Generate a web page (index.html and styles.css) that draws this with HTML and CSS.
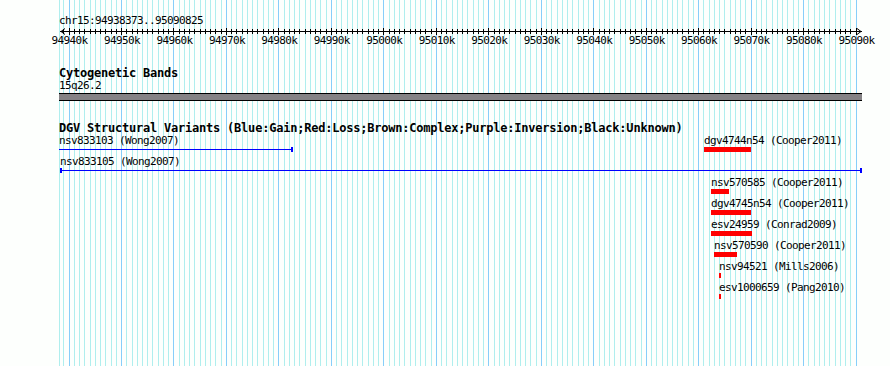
FILE: index.html
```html
<!DOCTYPE html>
<html lang="en">

<head>
    <meta charset="UTF-8">
    <title>chr15:94938373..95090825</title>
    <link rel="stylesheet" href="styles.css">
    <script>
        window.onload = function () {
            let start = 94938373, end = 95090825, width = 800;
            let px = pos => 1 + Math.round((pos - start) * width / (end - start + 1));

            let minor = 'M0.5 0V366', major = '', tickMinor = '', tickMajor = '';
            for (let kb = 94939; kb <= 95090; kb++) {
                let x = px(kb * 1000) + 0.5;
                if (kb % 10 == 0) {
                    major += 'M' + x + ' 0V366';
                    tickMajor += 'M' + x + ' 1V8';
                } else {
                    minor += 'M' + x + ' 0V366';
                    tickMinor += 'M' + x + ' 2V7';
                }
            }
            document.querySelector('#grid .minor').setAttribute('d', minor);
            document.querySelector('#grid .major').setAttribute('d', major);
            document.querySelector('#axis .ticks').setAttribute('d', tickMinor + tickMajor);
        };
    </script>
</head>

<body>
    <div class="browser">
        <div class="panel">
            <svg id="grid" width="803" height="366">
                <path class="minor" d=""></path>
                <path class="major" d=""></path>
            </svg>

            <!-- ruler -->
            <div class="track ruler">
                <div class="ref">chr15:94938373..95090825</div>
                <svg id="axis" width="803" height="8">
                    <path class="line" d="M1 4.5H803"></path>
                    <path class="line" d="M6 1.5L2 4.5L6 7.5M798 1.5L802 4.5L798 7.5"></path>
                    <path class="ticks" d=""></path>
                </svg>
                <div class="ruler_labels">
                    <span>94940k</span><span>94950k</span><span>94960k</span><span>94970k</span>
                    <span>94980k</span><span>94990k</span><span>95000k</span><span>95010k</span>
                    <span>95020k</span><span>95030k</span><span>95040k</span><span>95050k</span>
                    <span>95060k</span><span>95070k</span><span>95080k</span><span>95090k</span>
                </div>
            </div>

            <!-- cytobands -->
            <div class="track cyto">
                <div class="track_title">Cytogenetic Bands</div>
                <div class="band_name">15q26.2</div>
                <div class="cyto_bar"></div>
            </div>

            <!-- dgv -->
            <div class="track dgv">
                <div class="track_title">DGV Structural Variants (Blue:Gain;Red:Loss;Brown:Complex;Purple:Inversion;Black:Unknown)</div>
                <div class="row">
                    <div class="feature gain clipped" style="left:0;width:234px">
                        <div class="label">nsv833103 (Wong2007)</div>
                        <div class="bar"></div>
                    </div>
                    <div class="feature loss" style="left:645px;width:47px">
                        <div class="label">dgv4744n54 (Cooper2011)</div>
                        <div class="bar"></div>
                    </div>
                </div>
                <div class="row">
                    <div class="feature gain" style="left:1px;width:802px">
                        <div class="label">nsv833105 (Wong2007)</div>
                        <div class="bar"></div>
                    </div>
                </div>
                <div class="row">
                    <div class="feature loss" style="left:652px;width:18px">
                        <div class="label">nsv570585 (Cooper2011)</div>
                        <div class="bar"></div>
                    </div>
                </div>
                <div class="row">
                    <div class="feature loss" style="left:652px;width:40px">
                        <div class="label">dgv4745n54 (Cooper2011)</div>
                        <div class="bar"></div>
                    </div>
                </div>
                <div class="row">
                    <div class="feature loss" style="left:652px;width:41px">
                        <div class="label">esv24959 (Conrad2009)</div>
                        <div class="bar"></div>
                    </div>
                </div>
                <div class="row">
                    <div class="feature loss" style="left:655px;width:23px">
                        <div class="label">nsv570590 (Cooper2011)</div>
                        <div class="bar"></div>
                    </div>
                </div>
                <div class="row">
                    <div class="feature loss" style="left:660px;width:2px">
                        <div class="label">nsv94521 (Mills2006)</div>
                        <div class="bar"></div>
                    </div>
                </div>
                <div class="row">
                    <div class="feature loss" style="left:660px;width:2px">
                        <div class="label">esv1000659 (Pang2010)</div>
                        <div class="bar"></div>
                    </div>
                </div>
            </div>
        </div>
    </div>
</body>

</html>
```

FILE: styles.css
```css
* {
    margin: 0;
    padding: 0;
}

body {
    background: #fdfffd;
    color: #000;
    font-family: "DejaVu Sans Mono", "Liberation Mono", monospace;
    font-size: 11px;
    letter-spacing: -0.62px;
    overflow: hidden;
}

.browser {
    padding-left: 59px;
    height: 366px;
}

.panel {
    position: relative;
    width: 803px;
    height: 366px;
}

/* grid lines behind the tracks */
#grid {
    position: absolute;
    left: 0;
    top: 0;
}

#grid .minor {
    stroke: #afeeee;
    stroke-width: 1;
}

#grid .major {
    stroke: #87cefa;
    stroke-width: 1;
}

.track {
    position: relative;
}

.track_title {
    font-weight: bold;
    font-size: 12px;
    letter-spacing: -0.22px;
    line-height: 12px;
    white-space: nowrap;
}

/* ruler */
.ruler {
    padding-top: 14px;
}

.ruler .ref {
    line-height: 13px;
}

#axis {
    display: block;
}

#axis path {
    fill: none;
    stroke: #000;
    stroke-width: 1;
}

.ruler_labels {
    display: flex;
    margin-top: -1px;
    margin-left: -15.74px;
    line-height: 13px;
    white-space: nowrap;
}

.ruler_labels span {
    flex: 0 0 52.475px;
    text-align: center;
}

/* cytobands */
.cyto {
    margin-top: 20px;
}

.cyto .band_name {
    line-height: 13px;
}

.cyto_bar {
    height: 6px;
    margin-top: 1px;
    background: #858285;
    border-top: 1px solid #000;
    border-bottom: 1px solid #000;
}

/* structural variants */
.dgv {
    margin-top: 21px;
}

.dgv .row {
    position: relative;
    height: 21px;
}

.dgv .feature {
    position: absolute;
    top: 0;
}

.dgv .feature .label {
    line-height: 13px;
    white-space: nowrap;
}

.dgv .feature .bar {
    height: 5px;
    box-sizing: border-box;
}

.dgv .gain .bar {
    border-left: 2px solid #00f;
    border-right: 2px solid #00f;
    background: linear-gradient(#00f, #00f) center / 100% 1px no-repeat;
}

.dgv .gain.clipped .bar {
    border-left: 0;
}

.dgv .loss .bar {
    background: #f00;
}
```
